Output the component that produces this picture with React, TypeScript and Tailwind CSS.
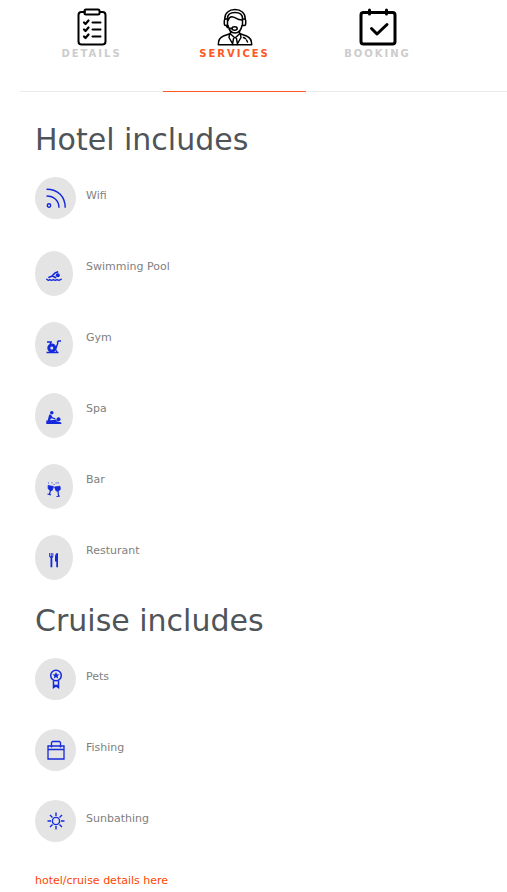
import React, { useState } from "react";

type IconProps = { className?: string };

function ClipboardIcon() {
  return (
    <svg viewBox="0 0 38 38" className="size-[38px]" fill="none" stroke="#000" strokeWidth="2" strokeLinecap="round" strokeLinejoin="round" aria-hidden="true">
      <path d="M12 4H8.500a3 3 0 0 0-3 3v26.500a3 3 0 0 0 3 3h21a3 3 0 0 0 3-3V7a3 3 0 0 0-3-3H27" />
      <rect x="11.500" y="1.500" width="15" height="5" rx="1.500" />
      <path d="M19.500 14.500h8M19.500 21.500h8M19.500 28.500h8" />
      <path d="M11 14.500l1.500 1.500 3-3.500M11 21.500l1.500 1.500 3-3.500M11 28.500l1.500 1.500 3-3.500" strokeWidth="2.200" />
    </svg>
  );
}

function AgentIcon() {
  return (
    <svg viewBox="0 0 38 38" className="size-[38px]" fill="none" stroke="#000" strokeWidth="1.500" strokeLinecap="round" strokeLinejoin="round" aria-hidden="true">
      <path d="M8.800 11V10.500C8.800 5 13 1.600 19 1.600S29.200 5 29.200 10.500V11" />
      <path d="M11.500 11V10.500c0-4 3-6 7.500-6s7.500 2 7.500 6v.5" />
      <path d="M11.500 11H9.800a1.500 1.500 0 0 0-1.500 1.500v3.500a1.500 1.500 0 0 0 1.500 1.500h1.700zM26.500 11h1.700a1.500 1.500 0 0 1 1.500 1.500v3.500a1.500 1.500 0 0 1-1.500 1.500h-1.700z" />
      <path d="M12 12.500c1-2.800 3-4 5-3.500 3 .5 3.500 3 9 3" />
      <path d="M12 17.500c.8 4.500 3.500 7.500 7 7.500s6.200-3 7-7.500M10.500 17.500c0 2.200 2 3 5.500 3" />
      <ellipse cx="18.600" cy="20.500" rx="2.600" ry="1.700" />
      <path d="M14.500 23.500V26l4.500 4 4.500-4v-2.500M14.500 25.500l-7 2.500C4 29.300 2.300 32 2.300 36.700h33.400c0-4.700-1.700-7.400-5.200-8.700l-7-2.500" />
      <path d="M13.500 26.500l-.5 3 4 7M24.500 26.500l.5 3-4 7M17.500 30.500L16.500 36.500M20.500 30.500l1 6M27.500 29.500l2 1.200M30.500 32l1 2" />
    </svg>
  );
}

function BookingIcon() {
  return (
    <svg viewBox="0 0 38 38" className="size-[38px]" fill="none" stroke="#000" strokeWidth="3" strokeLinecap="round" strokeLinejoin="round" aria-hidden="true">
      <rect x="2" y="4.500" width="34" height="31.500" rx="2.500" />
      <path d="M10.500 2v4M27.500 2v4M12.500 20.500l5.500 5.500 10-9.500" />
    </svg>
  );
}

function WifiIcon({ className }: IconProps) {
  return (
    <svg viewBox="0 0 20 20" className={className} fill="none" stroke="#1428dc" strokeWidth="1.400" aria-hidden="true">
      <circle cx="3" cy="17.500" r="1.700" />
      <path d="M.5 8C8 8 13 12.500 13 19.800M.5 1.300C12 1.300 19.200 8.500 19.200 19.800" />
    </svg>
  );
}

function SwimIcon({ className }: IconProps) {
  return (
    <svg viewBox="0 0 16 16" className={className} fill="none" stroke="#1428dc" strokeLinecap="round" strokeLinejoin="round" aria-hidden="true">
      <circle cx="11.800" cy="7.200" r="2" fill="#1428dc" stroke="none" />
      <path d="M3 9.300L6.500 8 9.500 9.500M6.500 7.500L9 5 11.500 4" strokeWidth="1.700" />
      <path d="M.8 11.300q1.500 1.800 3 .2 1.700 1.600 3.600 0 1.800 1.600 3.600 0 2 1.600 4.200-.2" strokeWidth="1.400" />
    </svg>
  );
}

function GymIcon({ className }: IconProps) {
  return (
    <svg viewBox="0 0 16 16" className={className} fill="none" stroke="#1428dc" aria-hidden="true">
      <path d="M1 3h5M4 3L5 6M9.500 10.500L12 3.500M11 3.500l1.500-1.500h2.500M.5 13.500h12M8 8l3 5" strokeWidth="1.400" />
      <circle cx="5.800" cy="9" r="3" strokeWidth="3" />
    </svg>
  );
}

function SpaIcon({ className }: IconProps) {
  return (
    <svg viewBox="0 0 16 16" className={className} fill="#1428dc" aria-hidden="true">
      <circle cx="5.800" cy="2.800" r="1.800" />
      <path d="M3.200 4.500L5 4.800l1.500 2.500 3 1-.5 1L5 8.200l-1 2.300 3-.5 3-.5 1 1.800H1.500z" />
      <circle cx="12.500" cy="9.300" r="2" />
      <path d="M.3 10.500h8l7 2v1.600H.3z" />
    </svg>
  );
}

function BarIcon({ className }: IconProps) {
  return (
    <svg viewBox="0 0 16 16" className={className} fill="#1428dc" stroke="#1428dc" strokeWidth=".8" aria-hidden="true">
      <path d="M2 4.500l5.500 1-1.200 3.700-1.600.5L2.300 8zM8.500 6l5.500-.8.3 3.300-2.300 1.800-2-.5z" />
      <path d="M4.500 9l-1 4.500M1.500 13l3.500.8M12 10l.5 5M10.500 15.500l3.500-.5" fill="none" strokeWidth="1.200" />
      <path d="M2.500 2.500v-1M5.500 1.800h1M9.500 2h1.200M12 1v1.500M7.500 3.500h1" fill="none" />
    </svg>
  );
}

function RestaurantIcon({ className }: IconProps) {
  return (
    <svg viewBox="0 0 16 16" className={className} fill="#1428dc" aria-hidden="true">
      <path d="M3.200 1h.9v3.200h.7V1h.9v3.200h.7V1h.9v3.500L6.300 6v9.300H4.500V6L3.200 4.500zM12 1v14.300h-1.700V9.500H9V5c0-2.500 1-4 3-4z" />
    </svg>
  );
}

function AwardIcon({ className }: IconProps) {
  return (
    <svg viewBox="0 0 20 20" className={className} fill="none" stroke="#1428dc" strokeWidth="1.500" aria-hidden="true">
      <circle cx="10" cy="6.500" r="5.300" />
      <path d="M7.500 11.500v7L10 16.800l2.500 1.700v-7M7.500 16.500h5" />
      <path d="M10 3l1 2.300 2.500.2-1.900 1.600.6 2.500L10 8.300 7.800 9.600l.6-2.500-1.900-1.600L9 5.300z" fill="#1428dc" stroke="none" />
    </svg>
  );
}

function BagIcon({ className }: IconProps) {
  return (
    <svg viewBox="0 0 20 20" className={className} fill="none" stroke="#1428dc" strokeWidth="1.300" aria-hidden="true">
      <path d="M2 6h16v13H2zM2 9.500h16M5.500 7.500V2.500l1-1h7l1 1v5" />
    </svg>
  );
}

function SunIcon({ className }: IconProps) {
  return (
    <svg viewBox="0 0 20 20" className={className} fill="none" stroke="#1428dc" strokeWidth="1.400" aria-hidden="true">
      <circle cx="10" cy="10" r="3.600" />
      <path d="M10 1.500v3.500M10 15v3.500M1.500 10H5M15 10h3.500M4 4l2.500 2.500M13.500 13.500L16 16M4 16l2.500-2.500M13.500 6.500L16 4" />
    </svg>
  );
}

type Service = { label: string; Icon: React.ComponentType<IconProps>; oval?: boolean };

const hotelServices: Service[] = [
  { label: "Wifi", Icon: WifiIcon },
  { label: "Swimming Pool", Icon: SwimIcon, oval: true },
  { label: "Gym", Icon: GymIcon, oval: true },
  { label: "Spa", Icon: SpaIcon, oval: true },
  { label: "Bar", Icon: BarIcon, oval: true },
  { label: "Resturant", Icon: RestaurantIcon, oval: true },
];

const cruiseServices: Service[] = [
  { label: "Pets", Icon: AwardIcon },
  { label: "Fishing", Icon: BagIcon },
  { label: "Sunbathing", Icon: SunIcon },
];

const tabs = [
  { label: "DETAILS", Icon: ClipboardIcon },
  { label: "SERVICES", Icon: AgentIcon },
  { label: "BOOKING", Icon: BookingIcon },
];

function ServiceList({ title, services }: { title: string; services: Service[] }) {
  return (
    <section>
      <h2 className="mb-5 text-[30px] leading-[35px] text-[#4f5459]">{title}</h2>
      <ul>
        {services.map(({ label, Icon, oval }) => (
          <li key={label} className="flex h-[71px] items-start">
            <div className="w-[51px] shrink-0">
              {oval ? (
                <span className="mt-[3px] flex h-[45px] w-[38px] items-center justify-center rounded-[50%] bg-[#e4e4e4] pt-1">
                  <Icon className="size-4" />
                </span>
              ) : (
                <span className="flex h-[42px] w-[41px] items-center justify-center rounded-[50%] bg-[#e4e4e4]">
                  <Icon className="size-5" />
                </span>
              )}
            </div>
            <span className="pt-2 leading-[22px]">{label}</span>
          </li>
        ))}
      </ul>
    </section>
  );
}

export default function App() {
  const [active, setActive] = useState("SERVICES");
  return (
    <main className="bg-white pl-5 font-['Verdana','DejaVu_Sans',sans-serif] text-[11px] text-[#808080]">
      <nav className="flex border-b border-[#ebebeb]" role="tablist">
        {tabs.map(({ label, Icon }) => (
          <button
            key={label}
            type="button"
            role="tab"
            aria-selected={active === label}
            onClick={() => setActive(label)}
            className={`-mb-px flex h-[92px] w-[143px] flex-col items-center border-b pt-2 text-[10px] leading-4 font-bold tracking-[2px] ${
              active === label ? "border-[#ff5722] text-[#ff5722]" : "border-transparent text-[#cccccc]"
            }`}
          >
            <Icon />
            {label}
          </button>
        ))}
      </nav>
      <div className="px-[15px] pt-[30px]">
        <ServiceList title="Hotel includes" services={hotelServices} />
        <ServiceList title="Cruise includes" services={cruiseServices} />
        <a href="#details" className="block leading-5 text-[#ff4500]">
          hotel/cruise details here
        </a>
      </div>
    </main>
  );
}
